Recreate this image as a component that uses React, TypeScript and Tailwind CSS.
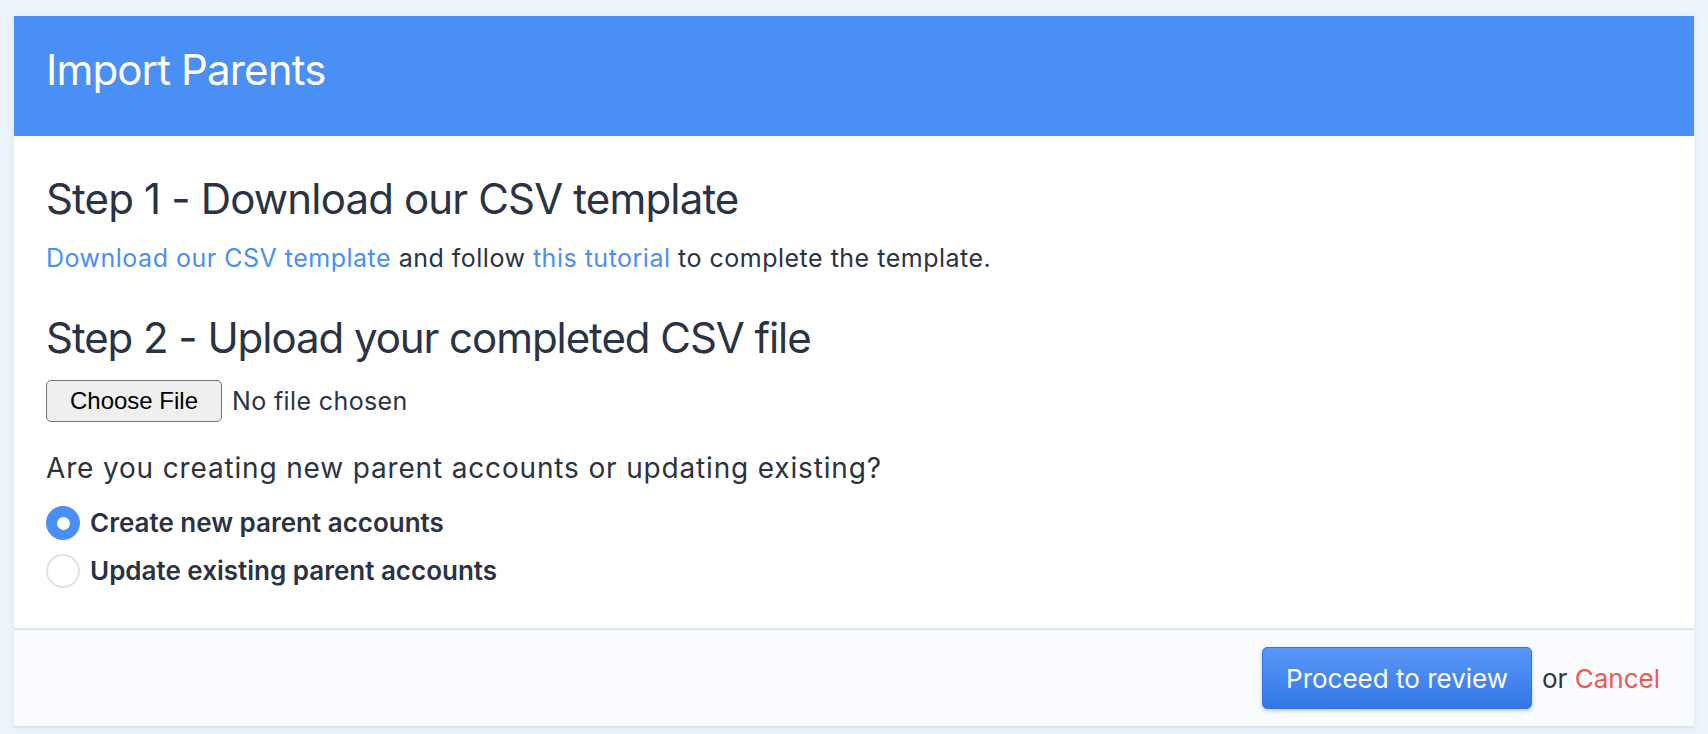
import React, { useState } from 'react';

const options = [
  { id: 'create', label: 'Create new parent accounts' },
  { id: 'update', label: 'Update existing parent accounts' },
];

const App: React.FC = () => {
  const [mode, setMode] = useState('create');

  return (
    <div className="min-h-screen bg-[#edf4fc] px-[14px] pt-[16px] pb-[6px] font-['Inter',sans-serif] text-[#2a3243]">
      <div className="bg-white shadow-[0_0_6px_rgba(120,160,210,0.15)] border-b-2 border-[#dbe7f5]">
        {/* Header */}
        <div className="h-[120px] bg-[#4a8ff5] px-[32px] pt-[29px]">
          <h1 className="text-[42px] leading-[1.2] font-normal tracking-[-0.02em] text-white">Import Parents</h1>
        </div>

        {/* Body */}
        <div className="px-[32px] pt-[38px] pb-[40px]">
          <h2 className="text-[42px] leading-[1.2] font-normal tracking-[-0.02em]">Step 1 - Download our CSV template</h2>
          <p className="mt-[16px] text-[25px] leading-[1.5] tracking-[0.02em]">
            <a href="#" className="text-[#4a8ff5]">Download our CSV template</a> and follow{' '}
            <a href="#" className="text-[#4a8ff5]">this tutorial</a> to complete the template.
          </p>

          <h2 className="mt-[35px] text-[42px] leading-[1.2] font-normal tracking-[-0.025em]">Step 2 - Upload your completed CSV file</h2>
          <div className="mt-[17px] flex items-center gap-[10px]">
            <button className="h-[42px] w-[176px] rounded-[5px] border border-[#767676] bg-[#efefef] font-['Liberation_Sans',Arial,sans-serif] text-[24px] text-black">
              Choose File
            </button>
            <span className="text-[25px] tracking-[0.015em]">No file chosen</span>
          </div>

          <p className="mt-[25px] text-[28px] leading-[1.5] tracking-[0.03em]">Are you creating new parent accounts or updating existing?</p>

          <div className="mt-[17px] flex flex-col gap-[14px]">
            {options.map((o) => (
              <label key={o.id} className="flex items-center gap-[10px] cursor-pointer" onClick={() => setMode(o.id)}>
                {mode === o.id ? (
                  <span className="flex h-[34px] w-[34px] items-center justify-center rounded-full bg-[#4a8ff5]">
                    <span className="h-[13px] w-[13px] rounded-full bg-white" />
                  </span>
                ) : (
                  <span className="h-[34px] w-[34px] rounded-full border-2 border-[#dfe3e8] bg-white" />
                )}
                <span className="text-[26px] font-semibold leading-[34px]">{o.label}</span>
              </label>
            ))}
          </div>
        </div>

        {/* Footer */}
        <div className="flex h-[98px] items-center justify-end gap-[10px] border-t-2 border-[#dbe7f5] bg-[#f9fbfe] pr-[34px]">
          <button className="h-[62px] w-[270px] rounded-[5px] border border-[#3474e0] bg-gradient-to-b from-[#5a97f6] to-[#3377e8] text-[26px] text-white shadow-[0_2px_4px_rgba(40,80,140,0.25)]">
            Proceed to review
          </button>
          <span className="text-[26px]">
            or <a href="#" className="text-[#f25555]">Cancel</a>
          </span>
        </div>
      </div>
    </div>
  );
};

export default App;
